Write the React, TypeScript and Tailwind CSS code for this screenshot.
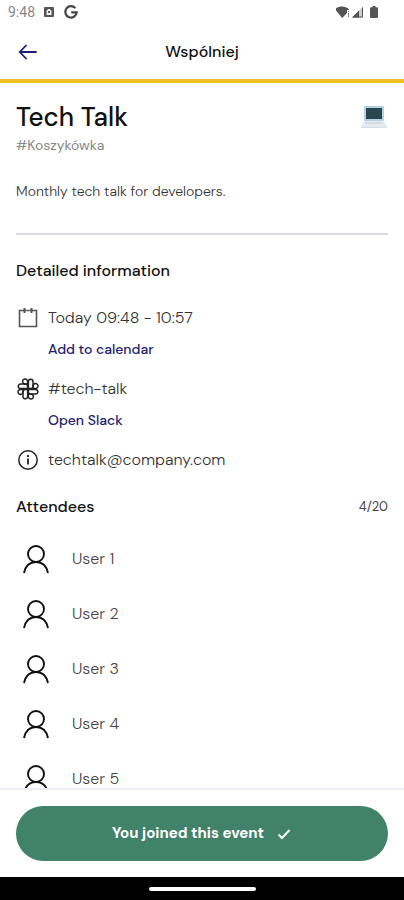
const attendees = ['User 1', 'User 2', 'User 3', 'User 4', 'User 5']

function StatusBar() {
  return (
    <div className="flex h-6 shrink-0 items-center justify-between pr-6 pl-2 text-[#555]">
      <div className="flex items-center gap-2">
        <span className="font-['Roboto',sans-serif] text-sm text-[#888]">9:48</span>
        <svg className="h-3 w-3" viewBox="0 0 12 12" fill="none">
          <rect x="1" y="1" width="10" height="10" rx="1" fill="#555" />
          <path d="M3.6 9V4.6L6 2.8l2.4 1.8V9z" fill="#fff" />
          <path d="M5 5h2v2H5z" fill="#555" />
        </svg>
        <svg className="h-4 w-4" viewBox="-1 -1 14 14" fill="none" stroke="#444" strokeWidth="1.9">
          <path d="M9.8 2.6A5 5 0 1 0 11 6.4H6.2" />
        </svg>
      </div>
      <div className="flex items-center gap-1">
        <svg className="h-3 w-7" viewBox="0 0 28 12" fill="none">
          <path d="M-1 3.2C2.600-.4 9.400-.4 13 3.200V4h-2v3L6.200 12z" fill="#555" />
          <path d="M12.5 5v1M12.5 7v4" stroke="#888" />
          <path d="M16 11.5 27 .5v11z" fill="#ccc" />
          <path d="M16 11.5 23 4.5v7z" fill="#555" />
          <path d="M26.5 1.5v9.5H17" stroke="#555" />
        </svg>
        <svg className="h-3 w-3" viewBox="0 0 12 12" fill="#555">
          <path d="M4.5 0h3v1.2H9a1 1 0 0 1 1 1V11a1 1 0 0 1-1 1H3a1 1 0 0 1-1-1V2.2a1 1 0 0 1 1-1h1.5z" />
        </svg>
      </div>
    </div>
  )
}

function BackIcon() {
  return (
    <svg className="h-6 w-6" viewBox="0 0 24 24" fill="none" stroke="#1f1d72" strokeWidth="1.8" strokeLinecap="round">
      <path d="M20 12H4M10 5.5 3.8 12l6.2 6.5" />
    </svg>
  )
}

function CalendarIcon() {
  return (
    <svg className="h-6 w-6" viewBox="0 0 24 24" fill="none" stroke="#555" strokeWidth="1.6">
      <path d="M7 4.5H3.5v16h17v-16H17M10.5 4.5h3" />
      <path d="M8.500 2v5M15.500 2v5" strokeWidth="2" />
      <path d="M7 4.500h3.500M13.500 4.500H17" />
    </svg>
  )
}

function SlackIcon() {
  return (
    <svg className="h-6 w-6" viewBox="0 0 24 24" fill="none" stroke="#222" strokeWidth="1.5">
      <path d="M11.6 7H9.3a2.5 2.5 0 1 1 2.300-2.500z" />
      <path d="M4.500 7h4.800a2.300 2.300 0 0 1 2.300 2.300v2.300H4.500a2.300 2.300 0 0 1 0-4.600z" />
      <path d="M12.400 4.500a2.300 2.300 0 0 1 4.600 0v4.800a2.300 2.300 0 0 1-2.300 2.300h-2.300z" />
      <path d="M17 11.600V9.300a2.500 2.500 0 1 1 2.500 2.300z" />
      <path d="M19.500 12.400a2.300 2.300 0 0 1 0 4.600h-4.800a2.300 2.300 0 0 1-2.300-2.300v-2.300z" />
      <path d="M12.400 17h2.300a2.500 2.500 0 1 1-2.300 2.500z" />
      <path d="M11.600 19.500a2.300 2.300 0 0 1-4.600 0v-4.800a2.300 2.300 0 0 1 2.300-2.300h2.300z" />
      <path d="M7 12.400v2.300a2.500 2.500 0 1 1-2.500-2.300z" />
    </svg>
  )
}

function InfoIcon() {
  return (
    <svg className="h-6 w-6" viewBox="0 0 24 24" fill="none" stroke="#222" strokeWidth="1.5">
      <circle cx="12" cy="12" r="9.2" />
      <path d="M12 10.5v6M12 7v2" strokeWidth="1.8" />
    </svg>
  )
}

function PersonIcon() {
  return (
    <svg className="h-10 w-10" viewBox="0 0 40 40" fill="none" stroke="#111" strokeWidth="1.9">
      <circle cx="20" cy="15" r="8" />
      <path d="M8 34c1.5-7 6-11 12-11s10.5 4 12 11" />
    </svg>
  )
}

function LaptopIcon() {
  return (
    <svg className="h-6 w-7" viewBox="0 0 28 24" fill="none">
      <rect x="4" y="1" width="20" height="15" rx="1" fill="#b4d3e2" />
      <rect x="6" y="3" width="16" height="11" fill="#2c4650" />
      <path d="M4 16h20l3 5.5H1z" fill="#e6ebef" />
      <path d="M6 17h16l1 2H5z" fill="#d6dde2" />
      <path d="M1 21.5h26V23H1z" fill="#d3e2ec" />
    </svg>
  )
}

export default function App() {
  return (
    <div className="flex h-screen flex-col bg-white font-['DM_Sans','Inter',sans-serif] text-[#111]">
      <StatusBar />

      <header className="grid h-[59px] shrink-0 grid-cols-[24px_1fr_24px] items-center border-b-4 border-[#eebf24] px-4">
        <button type="button" aria-label="Back">
          <BackIcon />
        </button>
        <h1 className="text-center text-base font-medium">Wspólniej</h1>
      </header>

      <main className="min-h-0 flex-1 overflow-hidden px-4 pt-4">
        <div className="flex items-center justify-between">
          <h2 className="text-[26px] leading-9 font-medium">Tech Talk</h2>
          <LaptopIcon />
        </div>
        <p className="text-sm leading-5 text-[#888]">#Koszykówka</p>
        <p className="mt-6 text-sm leading-6 font-light text-[#333]">Monthly tech talk for developers.</p>

        <section className="mt-[30px] border-t-2 border-[#d6d8e6] pt-6">
          <h3 className="text-base leading-6 font-medium">Detailed information</h3>
          <div className="mt-[23px] grid grid-cols-[24px_1fr] gap-x-2 text-base leading-6 font-light text-[#333]">
            <CalendarIcon />
            <p>Today 09:48 - 10:57</p>
            <a href="#calendar" className="col-start-2 mt-[7px] text-sm leading-6 font-medium text-[#23216f]">
              Add to calendar
            </a>
            <div className="mt-4">
              <SlackIcon />
            </div>
            <p className="mt-4">#tech-talk</p>
            <a href="#slack" className="col-start-2 mt-[7px] text-sm leading-6 font-medium text-[#23216f]">
              Open Slack
            </a>
            <div className="mt-4">
              <InfoIcon />
            </div>
            <p className="mt-4">techtalk@company.com</p>
          </div>
        </section>

        <section className="mt-[23px]">
          <div className="flex items-center justify-between leading-6">
            <h3 className="text-base font-medium">Attendees</h3>
            <span className="text-[13px] text-[#444]">4/20</span>
          </div>
          <ul className="mt-3">
            {attendees.map(name => (
              <li key={name} className="flex h-[55px] items-center gap-4 text-base leading-5 font-light text-[#444]">
                <PersonIcon />
                {name}
              </li>
            ))}
          </ul>
        </section>
      </main>

      <footer className="shrink-0 border-t-2 border-[#eeeef6] p-4">
        <button
          type="button"
          className="flex h-[55px] w-full items-center justify-center gap-3 rounded-full bg-[#41826a] text-[15px] font-bold text-white"
        >
          You joined this event
          <svg className="h-4 w-4" viewBox="0 0 16 16" fill="none" stroke="#fff" strokeWidth="2">
            <path d="m2.5 8.500 3.500 3.500 7.500-8" />
          </svg>
        </button>
      </footer>

      <div className="flex h-[23px] shrink-0 items-center justify-center bg-black">
        <div className="h-1 w-[107px] rounded-full bg-white" />
      </div>
    </div>
  )
}
